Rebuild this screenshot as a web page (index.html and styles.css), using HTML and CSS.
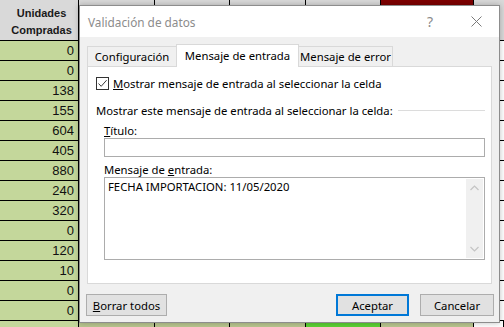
FILE: index.html
```html
<!DOCTYPE html>
<html lang="es">
<head>
    <meta charset="UTF-8">
    <title>Validación de datos</title>
    <link rel="stylesheet" href="styles.css">
</head>
<body>
    <div class="sheet">
        <div class="cell head"></div>
        <div class="cell head head-title">Unidades<br>Compradas</div>
        <div class="cell head"></div>
        <div class="cell head"></div>
        <div class="cell head"></div>
        <div class="cell head"></div>
        <div class="cell red"></div>
        <div class="cell head side"><i class="mark"></i></div>

        <div class="cell green"></div><div class="cell green">0</div><div class="cell"></div><div class="cell"></div><div class="cell"></div><div class="cell"></div><div class="cell"></div><div class="cell side"><i class="mark"></i></div>
        <div class="cell green"></div><div class="cell green">0</div><div class="cell"></div><div class="cell"></div><div class="cell"></div><div class="cell"></div><div class="cell"></div><div class="cell side"><i class="mark"></i></div>
        <div class="cell green"></div><div class="cell green">138</div><div class="cell"></div><div class="cell"></div><div class="cell"></div><div class="cell"></div><div class="cell"></div><div class="cell side"><i class="mark"></i></div>
        <div class="cell green"></div><div class="cell green">155</div><div class="cell"></div><div class="cell"></div><div class="cell"></div><div class="cell"></div><div class="cell"></div><div class="cell side"><i class="mark blue"></i></div>
        <div class="cell green"></div><div class="cell green">604</div><div class="cell"></div><div class="cell"></div><div class="cell"></div><div class="cell"></div><div class="cell"></div><div class="cell side"><i class="mark"></i></div>
        <div class="cell green"></div><div class="cell green">405</div><div class="cell"></div><div class="cell"></div><div class="cell"></div><div class="cell"></div><div class="cell"></div><div class="cell side"><i class="mark"></i></div>
        <div class="cell green"></div><div class="cell green">880</div><div class="cell"></div><div class="cell"></div><div class="cell"></div><div class="cell"></div><div class="cell"></div><div class="cell side"><i class="mark"></i></div>
        <div class="cell green"></div><div class="cell green">240</div><div class="cell"></div><div class="cell"></div><div class="cell"></div><div class="cell"></div><div class="cell"></div><div class="cell side"><i class="mark"></i></div>
        <div class="cell green"></div><div class="cell green">320</div><div class="cell"></div><div class="cell"></div><div class="cell"></div><div class="cell"></div><div class="cell"></div><div class="cell side"><i class="mark blue"></i></div>
        <div class="cell green"></div><div class="cell green">0</div><div class="cell"></div><div class="cell"></div><div class="cell"></div><div class="cell"></div><div class="cell"></div><div class="cell side"><i class="mark"></i></div>
        <div class="cell green"></div><div class="cell green">120</div><div class="cell"></div><div class="cell"></div><div class="cell"></div><div class="cell"></div><div class="cell"></div><div class="cell side"><i class="mark"></i></div>
        <div class="cell green"></div><div class="cell green">10</div><div class="cell"></div><div class="cell"></div><div class="cell"></div><div class="cell"></div><div class="cell"></div><div class="cell side"><i class="mark"></i></div>
        <div class="cell green"></div><div class="cell green">0</div><div class="cell"></div><div class="cell"></div><div class="cell"></div><div class="cell"></div><div class="cell"></div><div class="cell side"><i class="mark"></i></div>
        <div class="cell green"></div><div class="cell green">0</div><div class="cell"></div><div class="cell"></div><div class="cell"></div><div class="cell"></div><div class="cell"></div><div class="cell side"><i class="mark"></i></div>

        <div class="cell green"></div><div class="cell green"></div><div class="cell olive"></div><div class="cell olive"></div><div class="cell olive"></div><div class="cell lime"></div><div class="cell olive"></div><div class="cell"></div>
    </div>

    <div class="dialog">
        <div class="titlebar">
            <span class="title">Validación de datos</span>
            <span class="title-btn help">?</span>
            <span class="title-btn close">
                <svg width="11" height="11" viewBox="0 0 11 11"><path d="M0.5 0.5 L10.5 10.5 M10.5 0.5 L0.5 10.5" stroke="#7a7a7a" stroke-width="1" fill="none"/></svg>
            </span>
        </div>
        <div class="dialog-body">
            <div class="tabs">
                <div class="tab tab-config">Configuración</div>
                <div class="tab tab-input active">Mensaje de entrada</div>
                <div class="tab tab-error">Mensaje de error</div>
            </div>
            <div class="panel">
                <div class="check-row">
                    <span class="checkbox">
                        <svg width="11" height="11" viewBox="0 0 11 11"><path d="M1.5 5.5 L4.2 8.3 L9.6 2.2" stroke="#3a3a3a" stroke-width="1" fill="none"/></svg>
                    </span>
                    <span><u>M</u>ostrar mensaje de entrada al seleccionar la celda</span>
                </div>
                <div class="section-row">
                    <span>Mostrar este mensaje de entrada al seleccionar la celda:</span>
                    <span class="section-line"></span>
                </div>
                <div class="field">
                    <div class="field-label"><u>T</u>ítulo:</div>
                    <div class="input"></div>
                    <div class="field-label">Mensaje de <u>e</u>ntrada:</div>
                    <div class="textarea">
                        <div class="textarea-text">FECHA IMPORTACION: 11/05/2020</div>
                        <div class="scrollbar">
                            <svg width="9" height="6" viewBox="0 0 9 6"><path d="M0.5 5 L4.5 1 L8.5 5" stroke="#c4c4c4" stroke-width="1.2" fill="none"/></svg>
                            <svg width="9" height="6" viewBox="0 0 9 6"><path d="M0.5 1 L4.5 5 L8.5 1" stroke="#c4c4c4" stroke-width="1.2" fill="none"/></svg>
                        </div>
                    </div>
                </div>
            </div>
            <div class="footer">
                <button class="btn btn-clear"><u>B</u>orrar todos</button>
                <span class="spacer"></span>
                <button class="btn btn-ok">Aceptar</button>
                <button class="btn btn-cancel">Cancelar</button>
            </div>
        </div>
    </div>
</body>
</html>
```

FILE: styles.css
```css
* {
    box-sizing: border-box;
}
body {
    margin: 0;
    width: 504px;
    height: 327px;
    overflow: hidden;
    position: relative;
    background: #fff;
    font-family: 'Liberation Sans', Arial, sans-serif;
}
.sheet {
    display: grid;
    grid-template-columns: 5px 74px 76px 75px 76px 75px 93px 30px;
    grid-template-rows: 41px repeat(15, 20px);
}
.cell {
    border-right: 1px solid #000;
    border-bottom: 1px solid #000;
    font-size: 13px;
    color: #111;
    padding: 0 4px;
    display: flex;
    align-items: center;
    justify-content: flex-end;
    overflow: hidden;
    white-space: nowrap;
}
.head {
    background: #d9d9d9;
}
.head-title {
    font-weight: bold;
    font-size: 11px;
    text-align: center;
    justify-content: center;
    align-items: flex-end;
    white-space: normal;
    line-height: 17px;
    padding-bottom: 1px;
    color: #1a1a1a;
}
.green {
    background: #c4d79b;
}
.olive {
    background: #b9c68f;
}
.lime {
    background: #5cd134;
}
.red {
    background: #7d0000;
}
.side {
    justify-content: flex-start;
    padding-left: 27px;
}
.mark {
    display: block;
    width: 3px;
    height: 2px;
    margin-top: 3px;
    background: #b07020;
}
.mark.blue {
    background: #3a4a8a;
}

/* dialog */
.dialog {
    position: absolute;
    left: 79px;
    top: 5px;
    width: 421px;
    height: 318px;
    background: #f0f0f0;
    border: 1px solid #8d8d8d;
    box-shadow: 0 0 6px rgba(0,0,0,0.25);
    font-family: 'Noto Sans', sans-serif;
    font-size: 11.3px;
    color: #000;
    display: flex;
    flex-direction: column;
}
.titlebar {
    height: 31px;
    background: #fff;
    display: flex;
    align-items: center;
    padding-left: 8px;
    color: #8c8c8c;
    font-size: 11.8px;
}
.title {
    flex: 1;
}
.title-btn {
    width: 46px;
    height: 31px;
    display: flex;
    align-items: center;
    justify-content: center;
}
.help {
    font-size: 14px;
    color: #8a8a8a;
}
.dialog-body {
    flex: 1;
    padding: 7px 6px 0 7px;
    display: flex;
    flex-direction: column;
}
.tabs {
    display: flex;
    align-items: flex-end;
    height: 22px;
}
.tab {
    height: 20px;
    border: 1px solid #d9d9d9;
    border-bottom: none;
    background: #f0f0f0;
    display: flex;
    align-items: center;
    justify-content: center;
    white-space: nowrap;
}
.tab-config {
    width: 89px;
    border-right: none;
}
.tab-input {
    width: 123px;
}
.tab-error {
    width: 94px;
    border-left: none;
}
.tab.active {
    height: 23px;
    margin-bottom: -1px;
    background: #fff;
    position: relative;
    z-index: 1;
    padding-bottom: 2px;
}
.panel {
    width: 405px;
    height: 218px;
    background: #fff;
    border: 1px solid #d9d9d9;
    padding: 8px 6px 0 8px;
}
.check-row {
    display: flex;
    align-items: center;
    height: 16px;
    gap: 4px;
}
.checkbox {
    width: 13px;
    height: 13px;
    border: 1px solid #333;
    display: flex;
    align-items: center;
    justify-content: center;
}
.section-row {
    display: flex;
    align-items: center;
    height: 16px;
    margin-top: 11px;
}
.section-line {
    flex: 1;
    height: 1px;
    background: #dcdcdc;
    margin-left: 5px;
}
.field {
    margin-left: 8px;
}
.field-label {
    line-height: 15px;
    margin-top: 5px;
}
.input {
    height: 19px;
    border: 1px solid #acacac;
}
.textarea {
    height: 83px;
    border: 1px solid #acacac;
    display: flex;
    padding: 1px;
}
.textarea-text {
    flex: 1;
    padding: 0 2px;
    line-height: 16px;
}
.scrollbar {
    width: 17px;
    background: #f0f0f0;
    display: flex;
    flex-direction: column;
    justify-content: space-between;
    align-items: center;
    padding: 6px 0;
}
.footer {
    display: flex;
    margin-top: 10px;
    margin-left: -1px;
    margin-right: -1px;
    gap: 11px;
}
.spacer {
    flex: 1;
}
.btn {
    height: 22px;
    background: #e1e1e1;
    border: 1px solid #adadad;
    font-family: 'Noto Sans', sans-serif;
    font-size: 11.3px;
    color: #000;
    padding: 0;
}
.btn-clear {
    width: 81px;
}
.btn-ok {
    width: 73px;
    border: 2px solid #0078d7;
}
.btn-cancel {
    width: 74px;
}
```
